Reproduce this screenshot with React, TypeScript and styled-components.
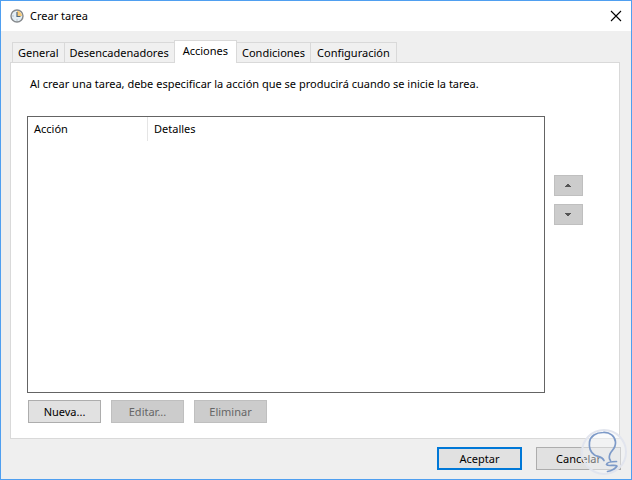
import React, { useState } from "react";
import styled, { createGlobalStyle, css } from "styled-components";

const GlobalStyle = createGlobalStyle`
  * { box-sizing: border-box; }
  body { margin: 0; }
  body, button, table {
    font-family: "Noto Sans", "Segoe UI", sans-serif;
    font-size: 11px;
    line-height: 16px;
    color: #000;
  }
`;

const Window = styled.div`
  position: relative;
  display: flex;
  flex-direction: column;
  min-height: 100vh;
  border: 1px solid #4f9ff0;
  background: #efefef;
`;

const TitleBar = styled.header`
  display: flex;
  align-items: center;
  height: 30px;
  padding: 0 9px;
  gap: 6px;
  background: #fff;
`;

const Title = styled.h1`
  flex: 1;
  margin: 0;
  font-size: 11px;
  font-weight: 400;
`;

const CloseButton = styled.button`
  display: flex;
  padding: 0;
  border: 0;
  background: none;
`;

const TabList = styled.div`
  display: flex;
  align-items: flex-end;
  height: 31px;
  padding: 0 11px;
`;

const Tab = styled.button<{ $active: boolean }>`
  height: 20px;
  margin: 0 0 0 -1px;
  padding: 0 5px;
  border: 1px solid #d9d9d9;
  border-bottom: 0;
  background: #f0f0f0;
  white-space: nowrap;
  &:first-child { margin-left: 0; }
  &:last-child { padding: 0 6px; }
  ${(p) =>
    p.$active &&
    css`
      z-index: 1;
      height: 23px;
      margin-bottom: -1px;
      padding: 0 8px 3px;
      background: #fff;
    `}
`;

const Panel = styled.main`
  flex: 1;
  display: flex;
  flex-direction: column;
  margin: 0 11px 0 9px;
  padding: 13px 36px 15px 16px;
  border: 1px solid #d9d9d9;
  background: #fff;
`;

const Description = styled.p`
  margin: 0 0 24px;
  padding-left: 3px;
`;

const ListArea = styled.div`
  flex: 1;
  display: flex;
  gap: 9px;
`;

const ListFrame = styled.div`
  flex: 1;
  min-height: 120px;
  border: 1px solid #646464;
`;

const ActionTable = styled.table`
  width: 100%;
  border-spacing: 0;
  table-layout: fixed;
`;

const HeaderCell = styled.th<{ $divided?: boolean }>`
  width: ${(p) => (p.$divided ? "120px" : "auto")};
  height: 24px;
  padding: 0 6px;
  border-right: ${(p) => (p.$divided ? "1px solid #e5e5e5" : "0")};
  font-weight: 400;
  text-align: left;
`;

const OrderButtons = styled.div`
  display: flex;
  flex-direction: column;
  gap: 8px;
  padding-top: 59px;
`;

const PushButton = styled.button<{ $size?: "arrow" | "dialog"; $primary?: boolean }>`
  display: flex;
  align-items: center;
  justify-content: center;
  width: ${(p) => (p.$size === "arrow" ? "29px" : p.$size === "dialog" ? "85px" : "73px")};
  height: ${(p) => (p.$size === "arrow" ? "21px" : "23px")};
  padding: 0;
  border: ${(p) => (p.$primary ? "2px solid #0078d7" : "1px solid #adadad")};
  background: #e1e1e1;
  &:disabled {
    border-color: #bfbfbf;
    background: #ccc;
    color: #666;
  }
`;

const ActionButtons = styled.div`
  display: flex;
  gap: 10px;
  margin-top: 7px;
  padding-left: 1px;
`;

const Footer = styled.footer`
  display: flex;
  justify-content: flex-end;
  gap: 14px;
  padding: 8px 10px 9px;
`;

const Watermark = styled.svg`
  position: absolute;
  z-index: 2;
  right: 3px;
  bottom: 3px;
  pointer-events: none;
`;

function ClockIcon() {
  return (
    <svg width="14" height="14" viewBox="0 0 14 14" aria-hidden="true">
      <circle cx="7" cy="7" r="6" fill="#e4eef4" stroke="#85898c" strokeWidth="1.4" />
      <path d="M7 7V2a5 5 0 0 1 5 5Z" fill="#f7ca78" />
      <path d="M7 3v4.5h3.5" fill="none" stroke="#50687c" strokeWidth="1.2" />
      <path d="M2.5 7h1M7 10.5v1" stroke="#8b9ba5" />
    </svg>
  );
}

function CloseIcon() {
  return (
    <svg width="12" height="12" viewBox="0 0 12 12" aria-hidden="true">
      <path d="m1 1 10 10M11 1 1 11" stroke="#000" strokeWidth="1.1" />
    </svg>
  );
}

function ArrowIcon({ down = false }: { down?: boolean }) {
  return (
    <svg width="7" height="4" viewBox="0 0 7 4" shapeRendering="crispEdges" aria-hidden="true">
      <path d={down ? "M0 0h6v1h-1v1h-1v1h-2v-1h-1v-1h-1Z" : "M2 0h2v1h1v1h1v1h-6v-1h1v-1h1Z"} fill="#555" />
    </svg>
  );
}

const tabs = ["General", "Desencadenadores", "Acciones", "Condiciones", "Configuración"];

export default function App() {
  const [active, setActive] = useState("Acciones");
  return (
    <>
      <GlobalStyle />
      <Window>
        <TitleBar>
          <ClockIcon />
          <Title>Crear tarea</Title>
          <CloseButton aria-label="Cerrar">
            <CloseIcon />
          </CloseButton>
        </TitleBar>
        <TabList role="tablist">
          {tabs.map((tab) => (
            <Tab key={tab} role="tab" aria-selected={tab === active} $active={tab === active} onClick={() => setActive(tab)}>
              {tab}
            </Tab>
          ))}
        </TabList>
        <Panel role="tabpanel">
          <Description>Al crear una tarea, debe especificar la acción que se producirá cuando se inicie la tarea.</Description>
          <ListArea>
            <ListFrame>
              <ActionTable>
                <thead>
                  <tr>
                    <HeaderCell $divided>Acción</HeaderCell>
                    <HeaderCell>Detalles</HeaderCell>
                  </tr>
                </thead>
              </ActionTable>
            </ListFrame>
            <OrderButtons>
              <PushButton $size="arrow" disabled aria-label="Subir">
                <ArrowIcon />
              </PushButton>
              <PushButton $size="arrow" disabled aria-label="Bajar">
                <ArrowIcon down />
              </PushButton>
            </OrderButtons>
          </ListArea>
          <ActionButtons>
            <PushButton>Nueva...</PushButton>
            <PushButton disabled>Editar...</PushButton>
            <PushButton disabled>Eliminar</PushButton>
          </ActionButtons>
        </Panel>
        <Footer>
          <PushButton $size="dialog" $primary>Aceptar</PushButton>
          <PushButton $size="dialog">Cancelar</PushButton>
        </Footer>
        <Watermark width="48" height="48" viewBox="-1 -1 48 48" aria-hidden="true">
          <circle cx="23" cy="23" r="22" fill="#f5f6f9" fillOpacity="0.45" stroke="#e2e5ee" strokeWidth="2" />
          <path
            d="M23 31.5C21 27 17 28 13.500 26C9 23 8 17 8.500 13C9.500 7 15 3.500 22 3.500C29 3 34 7 34.500 13C35 19 31 21 29 25C27.500 29 29 31 29.500 31.500M35.500 32.500C31 32.500 26 33 25.500 35.500C27 38 34 35 36 37C35 39 31 42 26.500 42.500"
            fill="none"
            stroke="#7d9ac8"
            strokeWidth="1.7"
            strokeLinecap="round"
            strokeLinejoin="round"
          />
        </Watermark>
      </Window>
    </>
  );
}
